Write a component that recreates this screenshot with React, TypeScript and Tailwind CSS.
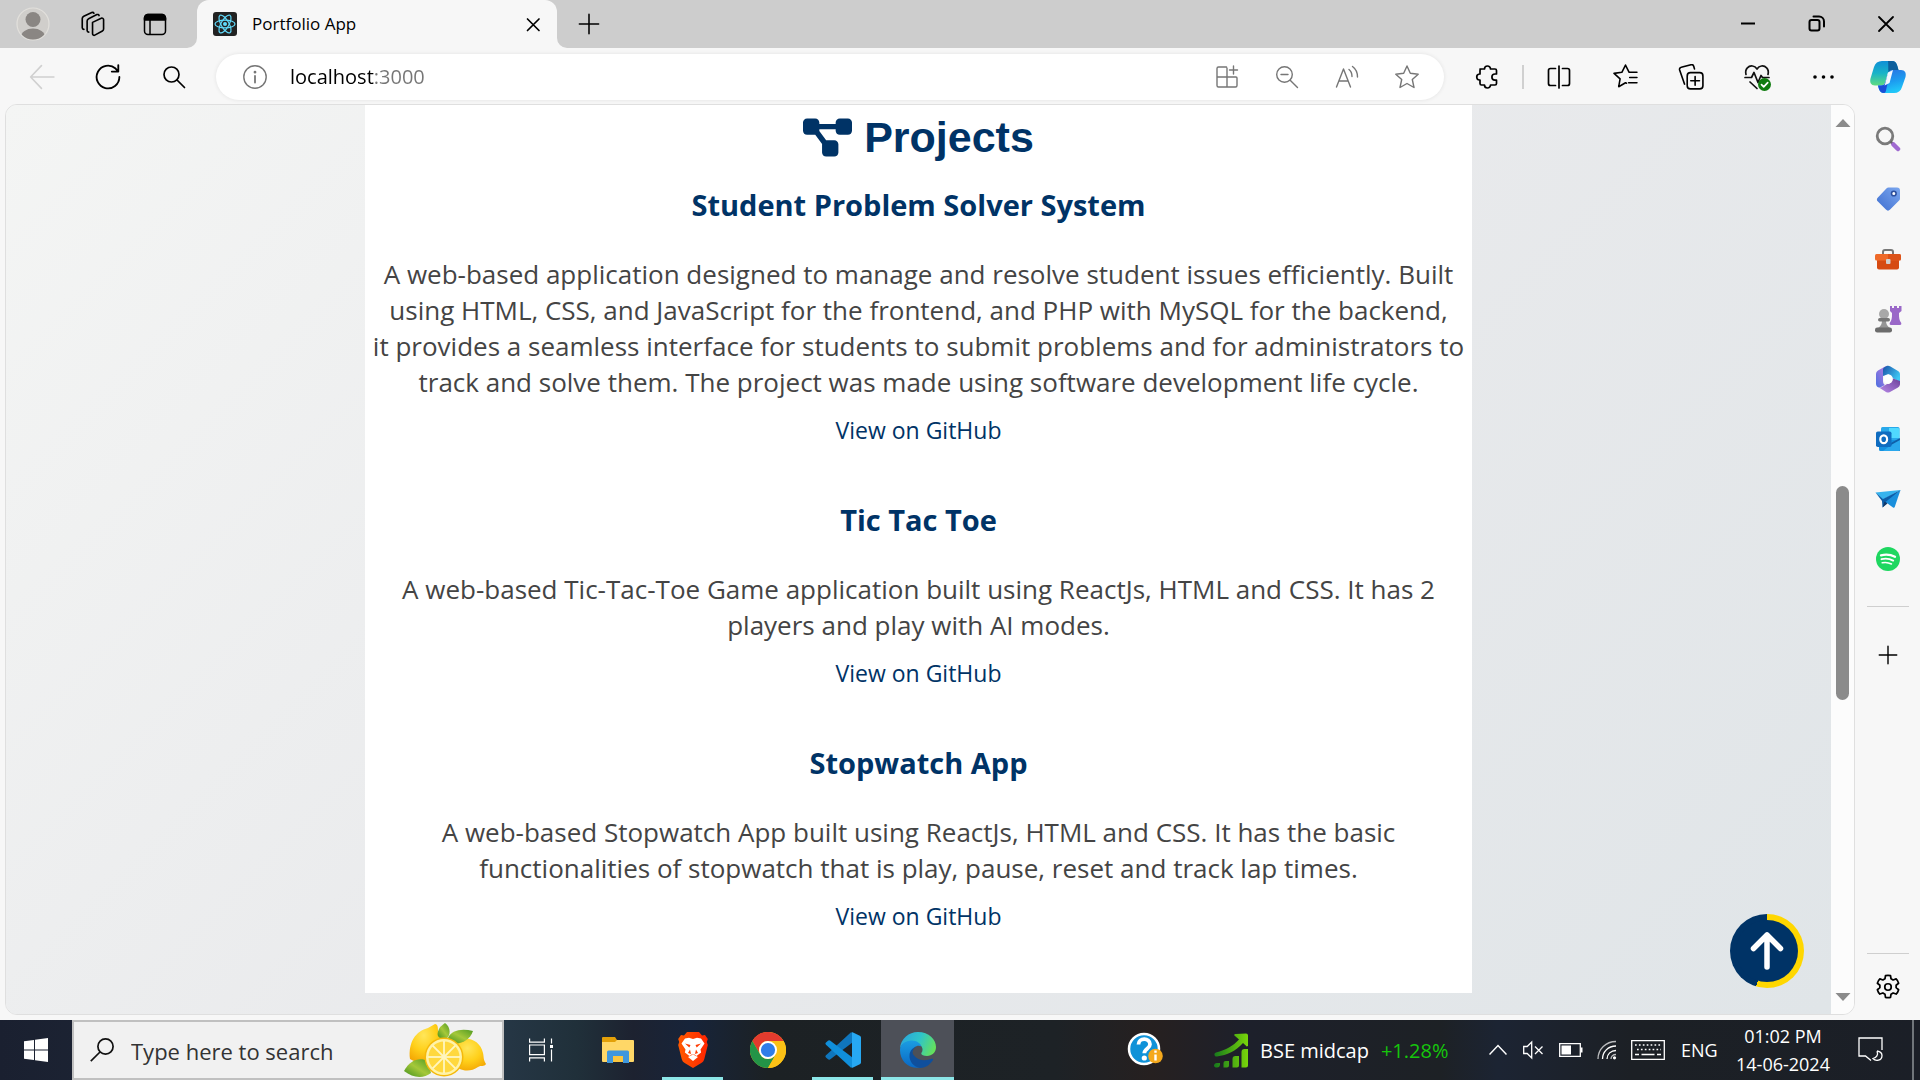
import type { ReactNode } from "react";
import { FaDiagramProject } from "react-icons/fa6";

type Project = { title: string; lines: string[] };

const projects: Project[] = [
  {
    title: "Student Problem Solver System",
    lines: [
      "A web-based application designed to manage and resolve student issues efficiently. Built",
      "using HTML, CSS, and JavaScript for the frontend, and PHP with MySQL for the backend,",
      "it provides a seamless interface for students to submit problems and for administrators to",
      "track and solve them. The project was made using software development life cycle.",
    ],
  },
  {
    title: "Tic Tac Toe",
    lines: [
      "A web-based Tic-Tac-Toe Game application built using ReactJs, HTML and CSS. It has 2",
      "players and play with AI modes.",
    ],
  },
  {
    title: "Stopwatch App",
    lines: [
      "A web-based Stopwatch App built using ReactJs, HTML and CSS. It has the basic",
      "functionalities of stopwatch that is play, pause, reset and track lap times.",
    ],
  },
];

function Line({ size = 24, width = 1.5, className = "", children }: { size?: number; width?: number; className?: string; children: ReactNode }) {
  return (
    <svg width={size} height={size} viewBox="0 0 24 24" fill="none" stroke="currentColor" strokeWidth={width} strokeLinecap="round" strokeLinejoin="round" className={className}>
      {children}
    </svg>
  );
}

function IconButton({ label, className, children }: { label: string; className: string; children: ReactNode }) {
  return (
    <button type="button" aria-label={label} className={`flex shrink-0 items-center justify-center ${className}`}>
      {children}
    </button>
  );
}

function TabBar() {
  return (
    <header className="flex h-12 shrink-0 items-center bg-[#cdcdcd] pl-[3px] text-black">
      <IconButton label="Profile" className="h-12 w-[60px]">
        <svg width="34" height="34" viewBox="0 0 34 34">
          <defs>
            <clipPath id="avatar"><circle cx="17" cy="17" r="15.5" /></clipPath>
          </defs>
          <circle cx="17" cy="17" r="16" fill="#d0cecb" stroke="#e2e0dc" strokeWidth="1.2" />
          <circle cx="17" cy="12.5" r="7.5" fill="#8a8683" />
          <ellipse cx="17" cy="30" rx="12" ry="8.5" fill="#8a8683" clipPath="url(#avatar)" />
        </svg>
      </IconButton>
      <IconButton label="Workspaces" className="h-12 w-[58px]">
        <Line size={26}>
          <path d="M12.500 10.500 20.500 6.700a1.500 1.500 0 0 1 2.200 1.400v8.600a2 2 0 0 1-1.100 1.800l-7 3.800a1.400 1.400 0 0 1-2.100-1.200z" />
          <path d="M9 19.500a1.500 1.500 0 0 1-1.500-1.500V9.300a2.500 2.500 0 0 1 1.400-2.200l7.600-3.800a1.500 1.500 0 0 1 2 .9" />
          <path d="M4.500 17A1.500 1.500 0 0 1 3 15.500V7a2.500 2.500 0 0 1 1.400-2.200L11.800 1.400a1.500 1.500 0 0 1 2 .7" />
        </Line>
      </IconButton>
      <IconButton label="Tab actions menu" className="h-12 w-[68px]">
        <Line>
          <rect x="1.500" y="2.500" width="21" height="20" rx="3.500" />
          <path d="M1.500 8V6A3.500 3.500 0 0 1 5 2.500h14A3.500 3.500 0 0 1 22.500 6v2z" fill="currentColor" />
          <path d="M7 8v14" />
        </Line>
      </IconButton>
      <svg width="10" height="10" viewBox="0 0 10 10" className="-ml-0.5 self-end"><path d="M10 0v10H0A10 10 0 0 0 10 0" fill="#f7f7f7" /></svg>
      <div className="flex h-12 w-[360px] shrink-0 items-center rounded-t-xl bg-[#f7f7f7] pr-3 pl-4">
        <svg width="24" height="24" viewBox="0 0 24 24" fill="none" stroke="#61dafb" strokeWidth="1.2">
          <rect width="24" height="24" rx="3" fill="#222" stroke="none" />
          <ellipse cx="12" cy="12" rx="10" ry="3.900" />
          <ellipse cx="12" cy="12" rx="10" ry="3.900" transform="rotate(60 12 12)" />
          <ellipse cx="12" cy="12" rx="10" ry="3.900" transform="rotate(120 12 12)" />
          <circle cx="12" cy="12" r="2" fill="#61dafb" stroke="none" />
        </svg>
        <span className="ml-[15px] flex-1 text-[17px] leading-6">Portfolio App</span>
        <IconButton label="Close tab" className="size-6">
          <Line width={1.7}><path d="m6.500 7 11.500 11.500M18 7 6.500 18.500" /></Line>
        </IconButton>
      </div>
      <svg width="10" height="10" viewBox="0 0 10 10" className="self-end"><path d="M0 0v10h10A10 10 0 0 1 0 0" fill="#f7f7f7" /></svg>
      <IconButton label="New tab" className="h-12 w-11">
        <Line size={22} width={1.7}><path d="M12 1.500v21M1.500 12h21" /></Line>
      </IconButton>
      <div className="ml-auto flex">
        <IconButton label="Minimize" className="h-12 w-[69px]">
          <Line width={2}><path d="M5 11.500h14" strokeLinecap="butt" /></Line>
        </IconButton>
        <IconButton label="Restore" className="h-12 w-[69px]">
          <Line width={2}>
            <rect x="4.500" y="8" width="10" height="10.500" rx="2" />
            <path d="M8.500 4.500H14a5 5 0 0 1 5 5v5" />
          </Line>
        </IconButton>
        <IconButton label="Close" className="h-12 w-[69px]">
          <Line width={1.8}><path d="m5 5 14 14M19 5 5 19" /></Line>
        </IconButton>
      </div>
    </header>
  );
}

function Copilot() {
  return (
    <svg width="38" height="34" viewBox="0 0 38 34">
      <defs>
        <linearGradient id="cpA" x1="0" y1="0" x2="0" y2="1"><stop stopColor="#0f8fd6" /><stop offset=".5" stopColor="#18b3c8" /><stop offset="1" stopColor="#5fdc80" /></linearGradient>
        <linearGradient id="cpB" x1="0" y1="0" x2=".3" y2="1"><stop stopColor="#2a6fe0" /><stop offset=".6" stopColor="#1c9cf0" /><stop offset="1" stopColor="#20c5f8" /></linearGradient>
      </defs>
      <path d="M13 1h10c3 0 4.500 2 5.200 4.500L29.500 10h-6c-3 0-4.400 2-5.200 5l-2 7c-.8 2.500-2 3.500-4.500 3.500H6c-4 0-5.500-3-4.500-7L5 7c1.200-4 4-6 8-6" fill="url(#cpA)" />
      <path d="M19 1h4c3 0 4.500 2 5.200 4.500L29.500 10H24c-2 0-3.500 1-4.500 3-.5-5 0-9-.5-12" fill="#0d5f9c" />
      <path d="M25 33H15c-3 0-4.500-2-5.200-4.500L9 25.500h3c2.500 0 3.700-1 4.500-3.500l2-7c.8-3 2.200-5 5.200-5H32c4 0 5.500 3 4.500 7L33 27c-1.200 4-4 6-8 6" fill="url(#cpB)" />
      <path d="M15 33c-3 0-4.500-2-5.200-4.500L9 25.500h3c2.500 0 3.700-1 4.500-3.500l2-7 2.500-2-3.500 15c-.5 3-1 5-2.500 5" fill="#1a4fd6" />
      <path d="M19 12.500 24 10l-3.500 13-5 2.500 1-3z" fill="#fff" opacity=".95" />
    </svg>
  );
}

function Toolbar() {
  return (
    <nav aria-label="Browser toolbar" className="flex h-14 shrink-0 items-center bg-[#f7f7f7] pt-px pl-[9px] text-black">
      <IconButton label="Back" className="h-12 w-[66px] text-[#d0d0d0]">
        <Line size={26}><path d="M23 12H1.500M11.500 1.500 1.500 12l10 10.500" /></Line>
      </IconButton>
      <IconButton label="Refresh" className="h-12 w-[66px]">
        <Line size={26} width={1.7}><path d="M22.500 12A10.500 10.500 0 1 1 19 4.200L21.500 7M21.500 1v6h-6" /></Line>
      </IconButton>
      <IconButton label="Search" className="h-12 w-[66px]">
        <Line width={1.7}><circle cx="9.500" cy="9.500" r="7.500" /><path d="m15 15 7.500 7.500" /></Line>
      </IconButton>
      <div className="ml-[9px] flex h-[46px] min-w-0 flex-1 items-center rounded-full bg-white pr-[7px] pl-[27px] text-[#767676] shadow-[0_0_4px_rgba(0,0,0,0.09)]">
        <Line width={1.4} className="shrink-0"><circle cx="12" cy="12" r="11.200" /><path d="M12 11v6.500" strokeWidth="1.8" /><circle cx="12" cy="7.200" r=".7" fill="currentColor" /></Line>
        <input
          aria-label="Address"
          defaultValue="localhost:3000"
          className="ml-[23px] min-w-0 flex-1 bg-linear-to-r from-black from-[84px] to-[#767676] to-[84px] bg-clip-text text-[20px] leading-7 text-transparent outline-none"
        />
        <IconButton label="App available" className="h-11 w-[60px]">
          <Line width={1.4}><path d="M11.500 2H3.500A1.500 1.500 0 0 0 2 3.500v17A1.500 1.500 0 0 0 3.500 22h17a1.500 1.500 0 0 0 1.500-1.500V13a1 1 0 0 0-1-1H2M12 22V3M18.500 1v8M14.500 5h8" /></Line>
        </IconButton>
        <IconButton label="Zoom out" className="h-11 w-[60px]">
          <Line width={1.4}><circle cx="9.500" cy="9.500" r="7.800" /><path d="m15.200 15.200 7.300 7.300M6 9.500h7" /></Line>
        </IconButton>
        <IconButton label="Read aloud" className="h-11 w-[60px]">
          <Line width={1.4}><path d="M1.500 22 8.500 4l7 18M4 16h9M14 4.500c2 1.500 3 4 3 7M17.500 1.500c3.500 2.500 5 6 5 10.500" /></Line>
        </IconButton>
        <IconButton label="Add to favorites" className="h-11 w-[60px]">
          <Line width={1.4}><path d="m12 1 3.300 7.300 7.900.9-5.900 5.300 1.700 8L12 18.500l-7 4 1.700-8L.8 9.200l7.900-.9z" /></Line>
        </IconButton>
      </div>
      <IconButton label="Extensions" className="ml-2.5 h-12 w-[66px]">
        <Line width={1.7}><path d="M5 4h4.500a3 3 0 0 1 6 0H20a1.500 1.500 0 0 1 1.500 1.500V9H20a3 3 0 0 0 0 6.200h1.500v3.300A1.500 1.500 0 0 1 20 20h-4.500a3 3 0 0 1-6 0H6.500A1.500 1.500 0 0 1 5 18.500V15a3 3 0 0 1-.5-6H5V5.500A1.500 1.500 0 0 1 6.500 4" /></Line>
      </IconButton>
      <div className="mx-0.5 h-6 w-0.5 shrink-0 bg-[#d0d0d0]" />
      <IconButton label="Split screen" className="h-12 w-[66px]">
        <Line width={1.7}><path d="M12 1v22M8.500 3.500H3.500a2 2 0 0 0-2 2v13a2 2 0 0 0 2 2h5M15.500 3.500h5a2 2 0 0 1 2 2v13a2 2 0 0 1-2 2h-5" /></Line>
      </IconButton>
      <IconButton label="Favorites" className="h-12 w-[66px]">
        <Line size={25} width={1.5}><path d="M13 18.500 12 18l-6.500 3.800 1.300-7.500L1 9l7.500-1L12 1l3.500 7H23M16 13h7M15 18h8" /></Line>
      </IconButton>
      <IconButton label="Collections" className="h-12 w-[66px]">
        <Line size={26} width={1.5}><rect x="8.500" y="8" width="14.5" height="15" rx="3" /><path d="M15.800 11.500v8M11.800 15.500h8M6 18.500 1.500 5.500A2 2 0 0 1 3 3l9-2.300a2 2 0 0 1 2.500 1.300l.7 2.500" /></Line>
      </IconButton>
      <IconButton label="Browser essentials" className="h-12 w-[66px]">
        <svg width="28" height="28" viewBox="0 0 28 28" fill="none" stroke="#111" strokeWidth="1.7" strokeLinecap="round" strokeLinejoin="round">
          <path d="M3 11.500C1.500 5.500 6 2.500 9.500 3c2 .3 3.500 1.500 4.500 3 1-1.500 2.500-2.700 4.500-3 3.500-.5 8 2.500 6.500 8.500M2 14.500h6.500l2.500-5 4 10 3-7 1.500 2H26M7 19l7 6.500" />
          <circle cx="21.500" cy="21.500" r="6.500" fill="#107c10" stroke="none" />
          <path d="m18.500 21.700 2.200 2.200 4-4.200" stroke="#fff" />
        </svg>
      </IconButton>
      <IconButton label="Settings and more" className="h-12 w-[66px]">
        <svg width="24" height="24" viewBox="0 0 24 24"><circle cx="4" cy="12" r="1.800" /><circle cx="12.500" cy="12" r="1.800" /><circle cx="21" cy="12" r="1.800" /></svg>
      </IconButton>
      <IconButton label="Copilot" className="h-12 w-16"><Copilot /></IconButton>
    </nav>
  );
}

function ProjectsPage() {
  return (
    <div className="min-w-0 flex-1 overflow-hidden bg-linear-135 from-[#f4f5f4] via-[#e9eaec] to-[#e0e5e8] pb-[21px]">
      <main className="mx-auto h-full max-w-[1107px] bg-white pt-0.5 text-center">
        <h2 className="flex items-center justify-center gap-3 font-['Liberation_Sans',sans-serif] text-[43px] leading-[60px] font-bold text-[#003366]">
          <FaDiagramProject className="size-[49px]" aria-hidden="true" />
          Projects
        </h2>
        {projects.map((p) => (
          <article key={p.title} className="pt-4 pb-[34px]">
            <h3 className="text-[29px] leading-[44px] font-bold text-[#003366]">{p.title}</h3>
            <p className="mt-[29px] text-[26px] leading-9 whitespace-nowrap text-[#444444]">
              {p.lines.map((line) => (
                <span key={line} className="block">{line}</span>
              ))}
            </p>
            <a href="#github" className="mt-3 block text-[23px] leading-9 text-[#003366]">View on GitHub</a>
          </article>
        ))}
      </main>
    </div>
  );
}

function Scrollbar() {
  return (
    <div className="flex w-[23px] shrink-0 flex-col items-center bg-[#fcfcfc] pt-3.5 pb-[13px]">
      <svg width="16" height="8" viewBox="0 0 16 8"><path d="M8 0 15.500 8H.5z" fill="#8b8b8b" /></svg>
      <div className="grid w-[13px] flex-1 grid-rows-[359fr_213fr_293fr]">
        <div className="row-start-2 rounded-full bg-[#8b8b8b]" />
      </div>
      <svg width="16" height="8" viewBox="0 0 16 8"><path d="M8 8 .5 0h15z" fill="#8b8b8b" /></svg>
    </div>
  );
}

function SidebarIcons() {
  return (
    <>
      <IconButton label="Search sidebar" className="h-[60px] w-full">
        <svg width="26" height="26" viewBox="0 0 26 26" fill="none">
          <circle cx="10" cy="10" r="7.8" stroke="#7a7a7a" strokeWidth="2.8" />
          <path d="m15.500 15.500 3 3" stroke="#666" strokeWidth="2.5" />
          <path d="m18.500 18.500 4.500 4.500" stroke="#a06bd0" strokeWidth="4.5" strokeLinecap="round" />
        </svg>
      </IconButton>
      <IconButton label="Shopping" className="h-[60px] w-full">
        <svg width="26" height="26" viewBox="0 0 26 26">
          <defs><linearGradient id="tag" x1="1" y1="0" x2="0" y2="1"><stop stopColor="#7ba7ef" /><stop offset="1" stopColor="#3f6fd0" /></linearGradient></defs>
          <path d="M13.500 1.500h8.500a3 3 0 0 1 3 3v8a3 3 0 0 1-.9 2.100l-9 9a3 3 0 0 1-4.200 0l-8-8a3 3 0 0 1 0-4.200l8.500-9a3 3 0 0 1 2.100-.9" fill="url(#tag)" />
          <circle cx="18.8" cy="7.5" r="2.3" fill="#fff" stroke="#2c4f9e" strokeWidth="1.6" />
        </svg>
      </IconButton>
      <IconButton label="Tools" className="h-[60px] w-full">
        <svg width="28" height="24" viewBox="0 0 28 24">
          <path d="M9 8V5a2 2 0 0 1 2-2h6a2 2 0 0 1 2 2v3" fill="none" stroke="#777" strokeWidth="2" />
          <path d="M3 12h22v8.500a2 2 0 0 1-2 2H5a2 2 0 0 1-2-2z" fill="#d64a12" />
          <rect x="1" y="7" width="26" height="6.5" rx="1.5" fill="#ef6a2a" />
          <path d="M14 7h11.500A1.500 1.500 0 0 1 27 8.500V12a1.500 1.500 0 0 1-1.500 1.500H14z" fill="#cf4411" opacity=".6" />
          <rect x="12" y="12" width="4.5" height="5" rx="1" fill="#d0d0d0" />
        </svg>
      </IconButton>
      <IconButton label="Games" className="h-[60px] w-full">
        <svg width="28" height="28" viewBox="0 0 28 28">
          <path d="M16 1h2v2h2V1h3v2h2V1h2.500v5L25 8c-.2 5 .5 8 2 9.500.7 1 .3 2.500-1 2.500H17c-1.500 0-1.700-1.500-1-2.500 1.500-1.500 2.200-4.500 2-9.500l-2-2z" fill="#9a68c8" />
          <circle cx="10" cy="9" r="5" fill="#a8a8a8" />
          <path d="M8 15h4c0 4 1 6 4 8H4c3-2 4-4 4-8" fill="#959595" />
          <rect x="4" y="13" width="12" height="3.5" rx="1.7" fill="#777" />
          <rect x="1" y="22.5" width="17" height="5" rx="2.2" fill="#6c6c6c" />
        </svg>
      </IconButton>
      <IconButton label="Microsoft 365" className="h-[60px] w-full">
        <svg width="26" height="28" viewBox="0 0 26 28">
          <defs>
            <linearGradient id="m3a" x1="1" y1="0" x2="0" y2="1"><stop stopColor="#c07be0" /><stop offset="1" stopColor="#4a6fe0" /></linearGradient>
            <linearGradient id="m3b" x1="0" y1="0" x2="1" y2=".6"><stop stopColor="#1b52a8" /><stop offset="1" stopColor="#3fc8f5" /></linearGradient>
            <linearGradient id="m3c" x1="0" y1="1" x2="1" y2="0"><stop stopColor="#b98aea" /><stop offset="1" stopColor="#6a3f98" /></linearGradient>
          </defs>
          <path d="M11 1 3 5.500A4 4 0 0 0 1 9v10c0 2 2 4 4 3.500l5-2.500c-1.500-1-2-2.500-2-4.500V8z" fill="url(#m3a)" />
          <path d="M9 2.500 11.500 1c1.500-.5 2.500-.3 3.500.2L23 6c1.500 1 2 2 2 3.500V17l-8.500-4.500a4 4 0 0 0-3-3.300L8 11V5c0-1 .3-2 1-2.500" fill="url(#m3b)" />
          <path d="M25 16v3.500a4 4 0 0 1-2 3l-8 4.500c-1.300.7-2.700.7-4 0l-7-4.500c1 .2 2 0 3-.5l5-3c3 .5 5-2 4.500-6z" fill="url(#m3c)" />
          <circle cx="13.3" cy="14" r="4.6" fill="#fff" />
        </svg>
      </IconButton>
      <IconButton label="Outlook" className="h-[60px] w-full">
        <svg width="26" height="26" viewBox="0 0 26 26">
          <rect x="6" y="1" width="18.5" height="18" rx="1.5" fill="#28a8ea" />
          <path d="M14 2h9a1.500 1.500 0 0 1 1.500 1.500V12H14z" fill="#50d9ff" />
          <path d="M4 14h21v9.500a1.500 1.500 0 0 1-1.500 1.500h-18A1.500 1.500 0 0 1 4 23.500z" fill="#1490df" />
          <path d="m25 12-11 6 11 7z" fill="#0f5fa8" />
          <path d="m25 14-9 5-8 6h15.500a1.500 1.500 0 0 0 1.500-1.500z" fill="#2aa7ec" />
          <rect x="1" y="5.5" width="15.5" height="15.5" rx="1.8" fill="#0f6cc0" />
          <ellipse cx="8.7" cy="13.2" rx="3.4" ry="3.9" fill="none" stroke="#fff" strokeWidth="2.2" />
        </svg>
      </IconButton>
      <IconButton label="Drop" className="h-[60px] w-full">
        <svg width="26" height="20" viewBox="0 0 26 20">
          <path d="M.5 3.500 25.500 1 8 10.500z" fill="#37b3ee" />
          <path d="m25.500 1-17.500 9-7.500-6.500L7 12l.5 6.500z" fill="#0d5da8" />
          <path d="M25.500 1 10.500 13l7.500 5.500c1 .5 1.500 0 1.800-.7z" fill="#1a8fdc" />
          <path d="m7.500 18.500 5-4-3-2z" fill="#123a6a" />
        </svg>
      </IconButton>
      <IconButton label="Spotify" className="h-[60px] w-full">
        <svg width="24" height="24" viewBox="0 0 24 24" fill="none" stroke="#fff" strokeLinecap="round">
          <circle cx="12" cy="12" r="12" fill="#1ed760" stroke="none" />
          <path d="M5 8.300c4.800-1.300 9.700-.8 14 1.500" strokeWidth="2.3" />
          <path d="M5.500 12.200c4-1.100 8-.6 11.700 1.400" strokeWidth="1.9" />
          <path d="M6.200 15.800c3.200-.8 6.300-.4 9.300 1.200" strokeWidth="1.5" />
        </svg>
      </IconButton>
    </>
  );
}

function Sidebar() {
  return (
    <aside aria-label="Edge sidebar" className="flex w-[65px] shrink-0 flex-col items-center pt-[5px]">
      <SidebarIcons />
      <hr className="mt-[17px] w-[42px] border-[#cfcfcf]" />
      <IconButton label="Customize sidebar" className="mt-[18px] h-[60px] w-full">
        <Line size={20} width={1.7}><path d="M12 1.500v21M1.500 12h21" /></Line>
      </IconButton>
      <hr className="mt-auto w-[42px] border-[#cfcfcf]" />
      <IconButton label="Sidebar settings" className="h-[66px] w-full">
        <Line size={26} width={1.6}>
          <circle cx="12" cy="12" r="3" />
          <path d="M9.700 1.500c1.500-.4 3.100-.4 4.600 0l.5 2.900 1.900 1.100 2.800-1c1.100 1.100 1.900 2.500 2.300 4l-2.300 1.900v2.200l2.300 1.900c-.4 1.500-1.200 2.900-2.300 4l-2.800-1-1.900 1.100-.5 2.900c-1.500.4-3.100.4-4.600 0l-.5-2.900-1.900-1.100-2.800 1a9 9 0 0 1-2.300-4l2.300-1.900v-2.200L2.200 8.500c.4-1.500 1.200-2.900 2.300-4l2.800 1 1.900-1.100z" />
        </Line>
      </IconButton>
    </aside>
  );
}

function ScrollTop() {
  return (
    <button
      type="button"
      aria-label="Scroll to top"
      className="absolute right-[50px] bottom-[26px] flex size-[74px] items-center justify-center rounded-full bg-[conic-gradient(#ffd700_197deg,#003366_197deg)]"
    >
      <span className="flex size-[62px] items-center justify-center rounded-full bg-[#003366]">
        <svg width="34" height="40" viewBox="0 0 34 40" fill="none" stroke="#fff" strokeWidth="5.5" strokeLinecap="round" strokeLinejoin="round">
          <path d="M17 36V4M3.500 17.500 17 4l13.500 13.500" />
        </svg>
      </span>
    </button>
  );
}

function Lemon() {
  const spokes = [0, 45, 90, 135, 180, 225, 270, 315];
  return (
    <svg width="82" height="56" viewBox="0 0 82 56" className="shrink-0">
      <defs>
        <radialGradient id="lem" cx=".45" cy=".3" r=".8"><stop stopColor="#ffe65a" /><stop offset=".5" stopColor="#ffd01a" /><stop offset="1" stopColor="#f2a000" /></radialGradient>
        <linearGradient id="leaf" x1="0" y1="1" x2="1" y2="0"><stop stopColor="#3f8f1e" /><stop offset=".5" stopColor="#a5c83a" /><stop offset="1" stopColor="#4f9a22" /></linearGradient>
      </defs>
      <path d="M6 37C4 20 12 9 24 6l7-4c3 0 3 4 3 7 5 6 3 16-2 22-6 8-17 12-26 6" fill="url(#lem)" />
      <path d="M57 18c8-4 20 2 22 13 1 4 0 6 3 11-2 3-5 1-8 3-8 6-20 4-24-3-4-8-1-20 7-24" fill="url(#lem)" />
      <path d="M41 1c6 4 6 13 1 16-6 0-11-2-7-10 1-3 4-4 6-6" fill="url(#leaf)" />
      <path d="M44 16c3-8 14-10 25-7-3 9-12 14-21 12z" fill="url(#leaf)" />
      <path d="M0 49c6-11 15-14 24-10l3 12c-8 6-18 5-27-2" fill="url(#leaf)" />
      <circle cx="40" cy="35" r="19.5" fill="#f5b90a" />
      <circle cx="40" cy="35" r="18" fill="#fff3a8" />
      <circle cx="40" cy="35" r="15.5" fill="#ffd83d" />
      {spokes.map((a) => (
        <path key={a} d="M40 35V19" stroke="#fff6c0" strokeWidth="1.8" transform={`rotate(${a} 40 35)`} />
      ))}
    </svg>
  );
}

function AppButton({ label, state = "idle", children }: { label: string; state?: "idle" | "running" | "active"; children: ReactNode }) {
  return (
    <button
      type="button"
      aria-label={label}
      className={`flex h-[60px] w-[73px] flex-col items-center ${state === "active" ? "bg-[#4d5058]" : ""}`}
    >
      <span className="flex flex-1 items-center pt-0.5">{children}</span>
      {state === "active" ? <span className="h-[3px] w-full bg-[#8ce6e8]" /> : <span className={`h-[3px] w-[61px] ${state === "running" ? "bg-[#8ce6e8]" : ""}`} />}
    </button>
  );
}

function TaskApps() {
  return (
    <div className="flex gap-0.5 first:[&>button]:mr-0.5 [&>button:first-child]:mr-0.5">
      <AppButton label="Task view">
        <svg width="24" height="24" viewBox="0 0 24 24" fill="none" stroke="#fff" strokeWidth="1.2">
          <path d="M.6.500v3.600h14.800V.5M.6 23.500v-3.600h14.800v3.600M22.500.5v5M22.500 11.500v12" /><path d="M.6 7h14.800v9.600H.6z" /><rect x="21" y="7" width="3" height="3" fill="#fff" stroke="none" />
        </svg>
      </AppButton>
      <AppButton label="File Explorer">
        <svg width="32" height="28" viewBox="0 0 32 28">
          <path d="M0 2a1 1 0 0 1 1-1h12l2 3v5H0z" fill="#e3a008" />
          <path d="M0 6h13l2-2h16a1 1 0 0 1 1 1v20a1 1 0 0 1-1 1H1a1 1 0 0 1-1-1z" fill="#ffd767" />
          <path d="M5 16a1.500 1.500 0 0 1 1.500-1.500h19A1.500 1.500 0 0 1 27 16v11h-6v-7H11v7H5z" fill="#3f97dd" />
          <path d="M11 20h10v6H11z" fill="#fbc63f" />
        </svg>
      </AppButton>
      <AppButton label="Brave" state="running">
        <svg width="30" height="36" viewBox="0 0 30 36">
          <defs><linearGradient id="brave"><stop stopColor="#ff5a00" /><stop offset="1" stopColor="#ff2400" /></linearGradient></defs>
          <path d="M9 0h12l3 3.500 3-.5 2.800 4-1 3 1 3-3.500 14c-.5 2-1.500 3-3 4L15 36l-8.300-5c-1.500-1-2.500-2-3-4L.2 13l1-3-1-3L3 3l3 .5z" fill="url(#brave)" />
          <path d="m15 7 4-1.200 4 .7 3.500 5-4 6 .6 3-4.600 3.500-2-1.500h-3l-2 1.500-4.600-3.500.6-3-4-6L7 6.500l4-.7z" fill="#fff" />
          <path d="m7 11.500 5.500 1.500-1.200 2.500zM23 11.500 17.500 13l1.200 2.500zM12 17.500l-2 3.500 3 1zM18 17.500l2 3.500-3 1z" fill="#ff3a00" />
          <path d="m10 25 5-2.500 5 2.500-5 4z" fill="#fff" />
        </svg>
      </AppButton>
      <AppButton label="Chrome">
        <svg width="36" height="36" viewBox="0 0 36 36">
          <circle cx="18" cy="18" r="18" fill="#fbc116" />
          <path d="M2.400 9a18 18 0 0 1 31.200 0H18a9 9 0 0 0-7.800 13.500z" fill="#e33b2e" />
          <path d="M2.400 9 10.200 22.500A9 9 0 0 0 25.800 22.500L18 36A18 18 0 0 1 2.400 9" fill="#239447" />
          <path d="M18 9h15.600A18 18 0 0 1 18 36l7.800-13.500A9 9 0 0 0 18 9" fill="#fbc116" />
          <circle cx="18" cy="18" r="9" fill="#fff" /><circle cx="18" cy="18" r="7.1" fill="#2f7de9" />
        </svg>
      </AppButton>
      <AppButton label="Visual Studio Code" state="running">
        <svg width="36" height="36" viewBox="0 0 36 36">
          <path d="M26 .3 1 23.300a1.500 1.500 0 0 0 0 2.200l2 1.800a1.600 1.600 0 0 0 2 .1L34 5.500z" fill="#0f76bd" />
          <path d="M26 35.700 1 12.700a1.500 1.500 0 0 1 0-2.200l2-1.800a1.600 1.600 0 0 1 2-.1L34 30.500z" fill="#108fdb" />
          <path d="M26 .3a2 2 0 0 1 1.500 0L34.800 3.800A2 2 0 0 1 36 5.600v24.800a2 2 0 0 1-1.200 1.800l-7.300 3.500a2 2 0 0 1-1.500 0c.6.200 1-.4 1-1.200V1.500c0-.8-.4-1.400-1-1.200" fill="#27a8f2" />
        </svg>
      </AppButton>
      <AppButton label="Microsoft Edge" state="active">
        <svg width="36" height="36" viewBox="0 0 36 36">
          <defs>
            <linearGradient id="edTop" x1="0" y1=".3" x2="1" y2=".6"><stop stopColor="#2aa6dc" /><stop offset=".5" stopColor="#2fc5c9" /><stop offset="1" stopColor="#66e05a" /></linearGradient>
            <linearGradient id="edLeft" x1="0" y1="0" x2="0" y2="1"><stop stopColor="#1b9de2" /><stop offset="1" stopColor="#0a68c4" /></linearGradient>
          </defs>
          <path d="M0 16A18 18 0 0 1 18 0c11 0 18 7.500 18 15 0 5.500-4 9-9 9-4 0-6.500-1.500-5.500-3.200 1.500-2 1.500-5-1-7.800C15 7 4 8 0 16" fill="url(#edTop)" />
          <path d="M0 18C0 12 6 8.500 11.500 8.500c5.500 0 9 3 10 6-4-2-8.500.5-9.500 6-1 8 5 13 11 14.500C10 38.500 0 30 0 18" fill="url(#edLeft)" />
          <path d="M16 14.500c-3.500 3-4.500 6-2 9 3.500 5 11 6 18 3.300.8-.3 1.500.3 1 1.200-3 5-8 8-13 8-7-1.500-11-7-10.500-13 .3-4 3-7 6.500-8.500" fill="#0f4f9c" />
        </svg>
      </AppButton>
    </div>
  );
}

function Tray() {
  return (
    <div className="ml-auto flex h-full items-center text-white">
      <IconButton label="Get help" className="h-full w-9">
        <svg width="36" height="36" viewBox="0 0 36 36">
          <circle cx="17" cy="17" r="15" fill="#0f92d8" stroke="#fff" strokeWidth="2.5" />
          <path d="M11.500 12.500c0-7 11.500-7 11.500-.3 0 4.500-5.700 4.500-5.700 9" fill="none" stroke="#fff" strokeWidth="3.8" />
          <circle cx="17.3" cy="26" r="2.6" fill="#fff" />
          <circle cx="28.5" cy="24" r="7.3" fill="#f5a81c" />
          <path d="M28.500 22.500v6M28.500 18.500v2.200" stroke="#fff" strokeWidth="2.4" />
        </svg>
      </IconButton>
      <button type="button" className="ml-[51px] flex h-full w-[237px] items-center gap-3 pt-0.5 text-[20px] leading-7 whitespace-nowrap">
        <svg width="34" height="36" viewBox="0 0 34 36" className="shrink-0">
          <defs><linearGradient id="mk"><stop stopColor="#177a1c" /><stop offset="1" stopColor="#79d60a" /></linearGradient></defs>
          <path d="M2 19.500C12 17 19 13 25 6.500l-4-3.500a1 1 0 0 1 .5-2L32 .500a2 2 0 0 1 2 2V12a1 1 0 0 1-2 .7L29 10C22 18 13 22 3 23.500a2 2 0 0 1-1-4M0 32a3 3 0 0 1 3-2h3v2a3 3 0 0 1-3 2.500H2c-1.500 0-2-1-2-2.500M9.500 30a2 2 0 0 1 2-2H15v4.500a2 2 0 0 1-2 2h-3.500zM18.500 26a3 3 0 0 1 3-3H25v9.500a2 2 0 0 1-2 2h-4.500zM27.500 19a3 3 0 0 1 3-3H34v16.500a2 2 0 0 1-2 2h-4.500z" fill="url(#mk)" />
        </svg>
        <span>BSE midcap</span>
        <span className="text-[#16c60c]">+1.28%</span>
      </button>
      <IconButton label="Show hidden icons" className="ml-[38px] h-full w-[18px]">
        <svg width="18" height="12" viewBox="0 0 18 12" fill="none" stroke="#fff" strokeWidth="1.5"><path d="m.5 10.500 8.500-9 8.500 9" /></svg>
      </IconButton>
      <IconButton label="Volume muted" className="ml-4 h-full w-5">
        <svg width="20" height="20" viewBox="0 0 20 20" fill="none" stroke="#fff" strokeWidth="1.3"><path d="M.7 6.500h3.500l4.500-4.500v16l-4.500-4.500H.7zM12 6.500l7.500 7.500M19.500 6.500 12 14" /></svg>
      </IconButton>
      <IconButton label="Battery" className="ml-4 h-full w-6">
        <svg width="24" height="14" viewBox="0 0 24 14"><path d="M.7.700h20.600v12.600H.7z" fill="none" stroke="#fff" strokeWidth="1.3" /><path d="M2.500 2.500H12v9H2.500zM22 4.500h1.500v5H22z" fill="#fff" /></svg>
      </IconButton>
      <IconButton label="Network" className="ml-3.5 h-full w-5">
        <svg width="20" height="20" viewBox="0 0 20 20" fill="none" stroke="#fff" strokeWidth="1.3">
          <path d="M1 19C1 9 9 1.500 19 1.500" opacity=".7" /><path d="M5.500 19C5.500 12 11 6 19 6" /><path d="M10 19c0-5 4-8.500 9-8.500" /><path d="M14 19c0-2.500 2-4.500 5-4.500" opacity=".7" /><circle cx="17.5" cy="17.8" r="1.6" fill="#fff" stroke="none" />
        </svg>
      </IconButton>
      <IconButton label="Touch keyboard" className="ml-3.5 h-full w-[34px]">
        <svg width="34" height="20" viewBox="0 0 34 20" fill="none" stroke="#fff" strokeWidth="1.3"><path d="M.7.700h32.600v18.600H.7z" /><path d="M4 5h26M6 9.500h24" strokeDasharray="1.7 2.2" strokeWidth="1.5" /><path d="M4 14.500h4M10.500 14.500h13M26 14.500h4" /></svg>
      </IconButton>
      <button type="button" className="ml-4 h-full w-9 text-[18px] leading-7">ENG</button>
      <button type="button" className="ml-[18px] flex h-full w-24 flex-col items-center justify-center text-[18px] leading-7 whitespace-nowrap">
        <span>01:02 PM</span>
        <span>14-06-2024</span>
      </button>
      <IconButton label="Notifications" className="ml-[27px] h-full w-[26px]">
        <svg width="26" height="26" viewBox="0 0 26 26" fill="none" stroke="#fff" strokeWidth="1.3"><path d="M13 23.500 7.500 19H1V1h23v12" /><path d="M19 14c1.500 4-.5 6.500-4 7.500 2.500 3 9 2.500 9-3 0-2.500-2-4-5-4.500" /></svg>
      </IconButton>
      <div className="mr-1.5 ml-7 h-full w-0.5 bg-[#70757a]" />
    </div>
  );
}

function Taskbar() {
  return (
    <footer className="flex h-[60px] shrink-0 items-center bg-[linear-gradient(90deg,#1a2030_0%,#1c2333_5%,#263746_26%,#20303a_30%,#1d2230_33%,#17243a_36%,#1c2124_40%,#1d2226_55%,#262020_60%,#1d202b_65%,#1d2125_75%,#1c2433_78%,#1c2025_85%,#1b1f27_100%)]">
      <IconButton label="Start" className="h-full w-[72px]">
        <svg width="24" height="24" viewBox="0 0 24 24" fill="#fff"><path d="M0 3.300 10 2v9.500H0zM11 1.800 24 0v11.500H11zM0 12.500h10V22L0 20.700zM11 12.500h13V24l-13-1.800z" /></svg>
      </IconButton>
      <label className="flex h-full w-[432px] items-center border-2 border-[#c0c0c0] bg-[#f1f1f1] pr-4 pl-4">
        <svg width="24" height="24" viewBox="0 0 24 24" fill="none" stroke="#111" strokeWidth="1.7" className="shrink-0"><circle cx="15.5" cy="8.500" r="7.6" /><path d="M10 14 .8 23.200" /></svg>
        <input aria-label="Search" placeholder="Type here to search" className="ml-[17px] min-w-0 flex-1 bg-transparent pt-0.5 text-[22px] leading-8 placeholder-[#333333] outline-none" />
        <Lemon />
      </label>
      <TaskApps />
      <Tray />
    </footer>
  );
}

export default function App() {
  return (
    <div className="flex h-screen flex-col overflow-hidden bg-[#f7f7f7] font-['Open_Sans',sans-serif]">
      <TabBar />
      <Toolbar />
      <div className="flex min-h-0 flex-1">
        <div className="flex min-w-0 flex-1 pb-[5px] pl-[5px]">
          <div className="relative flex min-w-0 flex-1 overflow-hidden rounded-xl border border-[#dfdfdf]">
            <ProjectsPage />
            <Scrollbar />
            <ScrollTop />
          </div>
        </div>
        <Sidebar />
      </div>
      <Taskbar />
    </div>
  );
}
